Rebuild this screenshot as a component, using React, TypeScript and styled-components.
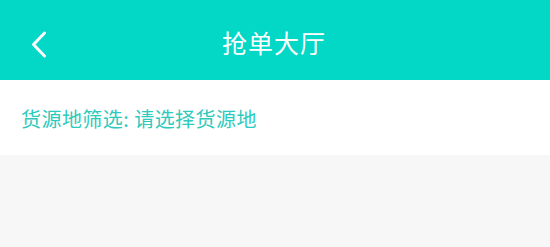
import React from 'react';
import styled, { createGlobalStyle } from 'styled-components';

const GlobalStyle = createGlobalStyle`
  html, body {
    margin: 0;
    padding: 0;
    background: #f7f7f7;
    font-family: "Noto Sans CJK SC", "Noto Sans", sans-serif;
  }
`;

function App() {
  return (
    <Page>
      <GlobalStyle />
      <Header>
        <Back aria-label="返回">
          <svg width="16" height="27" viewBox="0 0 16 27" fill="none">
            <path
              d="M13.5 2 L2.5 13.5 L13.5 25"
              stroke="#ffffff"
              strokeWidth="3"
              strokeLinecap="round"
              strokeLinejoin="round"
            />
          </svg>
        </Back>
        <Title>抢单大厅</Title>
      </Header>
      <FilterBar>
        <FilterText>货源地筛选: 请选择货源地</FilterText>
      </FilterBar>
    </Page>
  );
}

export default App;

const Page = styled.div`
  width: 550px;
  min-height: 247px;
  background: #f7f7f7;
`;
const Header = styled.div`
  position: relative;
  height: 80px;
  background: #03d7c6;
  display: flex;
  align-items: center;
  justify-content: center;
`;
const Back = styled.div`
  position: absolute;
  left: 31px;
  top: 31px;
  display: flex;
`;
const Title = styled.div`
  color: #ffffff;
  font-size: 25px;
  line-height: 1;
  margin-top: 4px;
  margin-right: 2px;
  letter-spacing: 1px;
`;
const FilterBar = styled.div`
  height: 75px;
  background: #ffffff;
  display: flex;
  align-items: center;
  padding-left: 21px;
`;
const FilterText = styled.div`
  color: #2ecabd;
  font-size: 20px;
  line-height: 1;
  margin-top: 2px;
  letter-spacing: 0.45px;
`;
